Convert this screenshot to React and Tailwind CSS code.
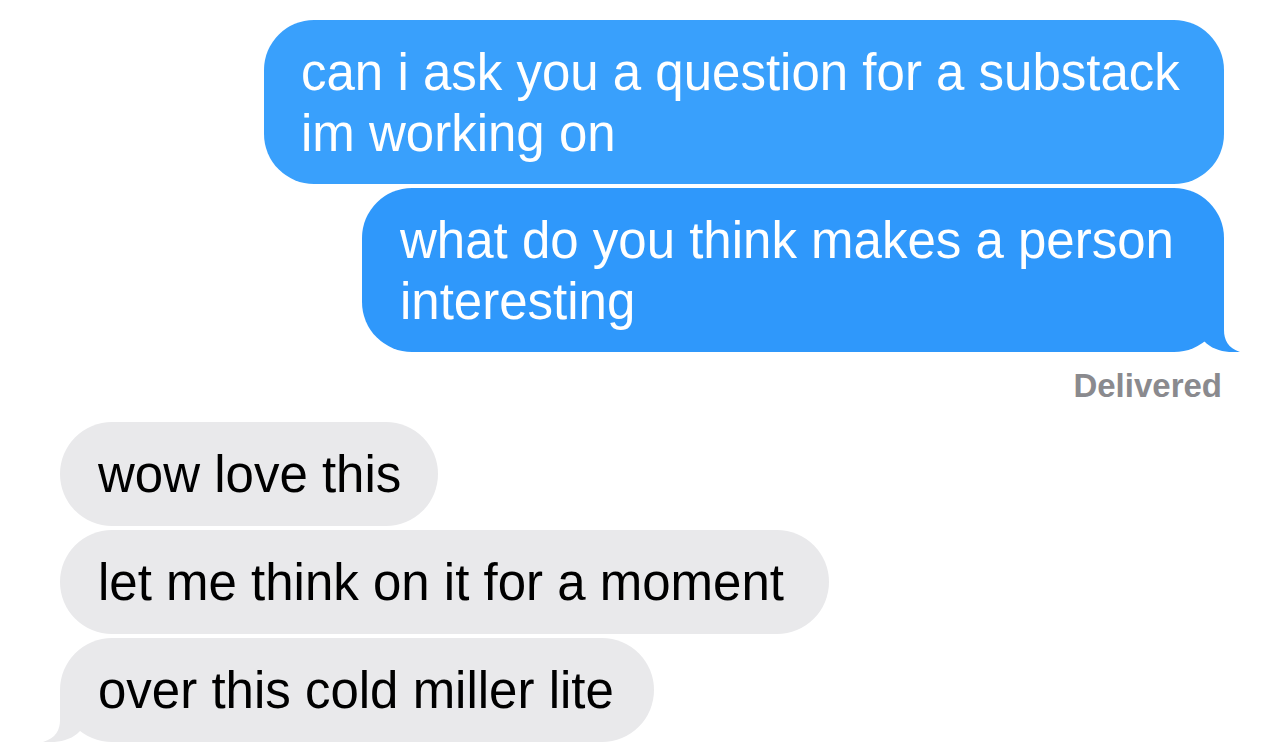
function BlueTail({ color }) {
  return (
    <svg
      className="absolute bottom-0 right-[-16px]"
      width="41"
      height="52"
      viewBox="0 0 41 52"
    >
      <path d="M0 0 L25 0 L25 30 C25 40 29 48 41 52 C29 53 14 51 5 41 L0 41 Z" fill={color} />
    </svg>
  );
}

function GrayTail() {
  return (
    <svg
      className="absolute bottom-0 left-[-17px]"
      width="42"
      height="52"
      viewBox="0 0 42 52"
    >
      <path d="M42 0 L17 0 L17 30 C17 40 13 48 0 52 C13 53 28 51 37 41 L42 41 Z" fill="#e9e9eb" />
    </svg>
  );
}

export default function App() {
  const font = { fontFamily: '"Liberation Sans", Arial, sans-serif' };

  return (
    <div className="w-[1284px] h-[754px] overflow-hidden bg-white" style={font}>
      <div className="flex flex-col items-end gap-[4px] pt-[20px] pr-[60px]">
        <div className="w-[960px] rounded-[50px] bg-[#39a0fc] pl-[37px] pr-[30px] pt-[22px] pb-[20px] text-[51px] leading-[61px] text-white">
          can i ask you a question for a substack
          <br />
          im working on
        </div>
        <div className="relative w-[862px] rounded-[50px] bg-[#2f98fb] pl-[38px] pr-[30px] pt-[22px] pb-[20px] text-[51px] leading-[61px] text-white">
          what do you think makes a person
          <br />
          interesting
          <BlueTail color="#2f98fb" />
        </div>
      </div>

      <div className="flex justify-end pr-[62px] mt-[14px]">
        <span className="text-[33px] leading-[40px] font-bold text-[#8a8a8e]">Delivered</span>
      </div>

      <div className="flex flex-col items-start gap-[4px] pl-[60px] mt-[16px]">
        <div className="rounded-[52px] bg-[#e9e9eb] pl-[38px] pr-[37px] pt-[22px] pb-[21px] text-[51px] leading-[61px] text-black whitespace-nowrap">
          wow love this
        </div>
        <div className="rounded-[52px] bg-[#e9e9eb] pl-[38px] pr-[45px] pt-[22px] pb-[21px] text-[51px] leading-[61px] text-black whitespace-nowrap">
          let me think on it for a moment
        </div>
        <div className="relative rounded-[52px] bg-[#e9e9eb] pl-[38px] pr-[40px] pt-[22px] pb-[21px] text-[51px] leading-[61px] text-black whitespace-nowrap">
          over this cold miller lite
          <GrayTail />
        </div>
      </div>
    </div>
  );
}
